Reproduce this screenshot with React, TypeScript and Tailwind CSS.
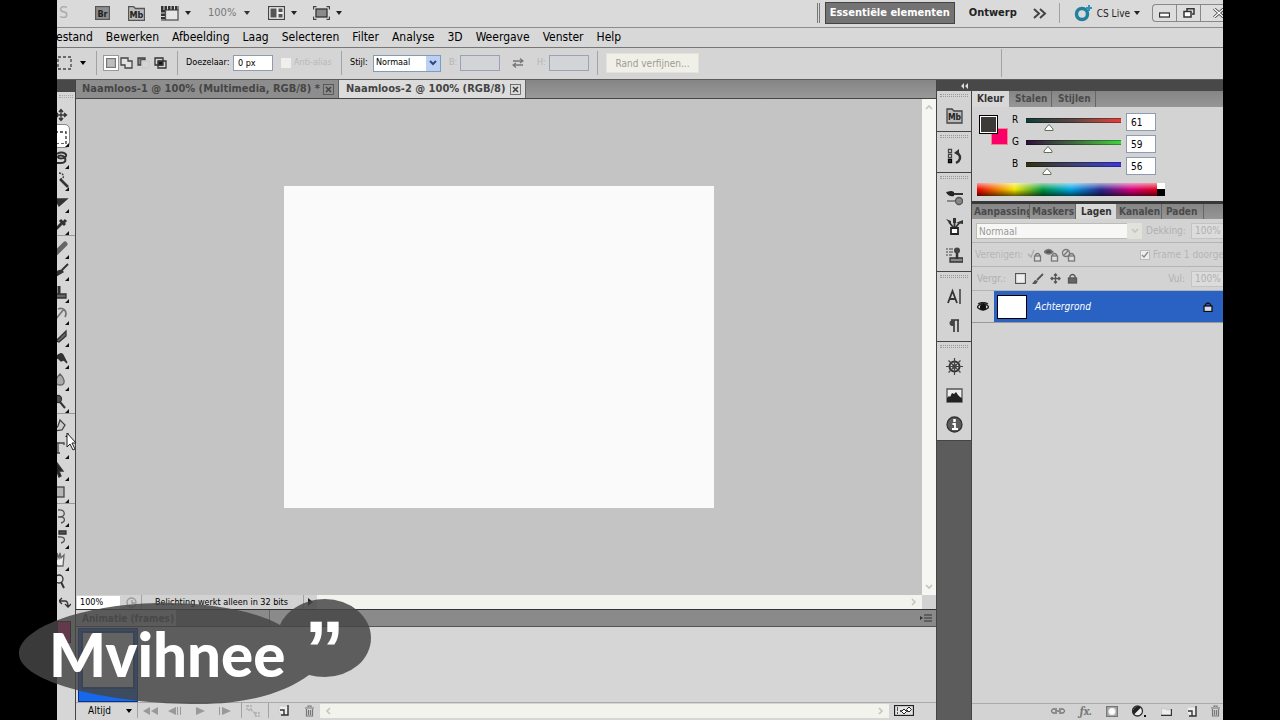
import clsx from 'clsx'
import type { ReactNode } from 'react'

const menus = ['Bewerken', 'Afbeelding', 'Laag', 'Selecteren', 'Filter', 'Analyse', '3D', 'Weergave', 'Venster', 'Help']

const channels = [
  { name: 'R', value: 61, track: 'bg-linear-to-r from-[#0c3b38] via-[#5a4644] to-[#e33b38]' },
  { name: 'G', value: 59, track: 'bg-linear-to-r from-[#2d0c38] via-[#3f6b3f] to-[#3bd43a]' },
  { name: 'B', value: 56, track: 'bg-linear-to-r from-[#33300a] via-[#3f3f70] to-[#3b34dc]' },
]

function Icon({ children, w = 16, h = 16, className }: { children: ReactNode; w?: number; h?: number; className?: string }) {
  return (
    <svg
      width={w}
      height={h}
      viewBox={`0 0 ${w} ${h}`}
      fill="none"
      stroke="currentColor"
      strokeWidth="1.3"
      className={clsx('shrink-0', className)}
      aria-hidden="true"
    >
      {children}
    </svg>
  )
}

function Caret({ className }: { className?: string }) {
  return (
    <Icon w={6} h={4} className={className}>
      <path d="M0 0h6L3 4z" fill="currentColor" stroke="none" />
    </Icon>
  )
}

function Divider({ className }: { className?: string }) {
  return <span className={clsx('w-px shrink-0 bg-[#a2a2a2]', className)} />
}

function AppBar() {
  return (
    <header className="flex h-7 shrink-0 items-center border-b border-[#8c8c8c] bg-[#dadada] pb-px text-[#222]">
      <span className="ml-[2px] w-9 text-base leading-5 text-[#aaa]">S</span>
      <button aria-label="Bridge">
        <Icon w={15} h={14}>
          <rect x=".5" y=".5" width="14" height="13" fill="#8d8d8d" stroke="#555" />
          <text x="7.5" y="10.5" textAnchor="middle" fontSize="9" fontWeight="700" fill="#222" stroke="none">Br</text>
        </Icon>
      </button>
      <button aria-label="Mini Bridge" className="ml-[18px]">
        <Icon w={17} h={15}>
          <path d="M.5 14.500V.5h5l2 2h9v12z" fill="#bbb" stroke="#555" />
          <text x="8.500" y="11.500" textAnchor="middle" fontSize="9" fontWeight="700" fill="#222" stroke="none">Mb</text>
        </Icon>
      </button>
      <button aria-label="Extra's" className="ml-4 flex items-center gap-[6px]">
        <Icon w={18} h={15}>
          <rect x="4.500" y="4" width="12.500" height="10" fill="#e6e6e6" stroke="#555" />
          <path d="M0 2h18" stroke="#333" strokeWidth="4" strokeDasharray="2.500 1" />
          <path d="M2 4v11" stroke="#333" strokeWidth="4" strokeDasharray="2.500 1" />
        </Icon>
        <Caret />
      </button>
      <button aria-label="Zoomniveau" className="ml-[17px] flex items-center gap-2 text-[11px] text-[#777]">
        100%
        <Caret className="text-[#333]" />
      </button>
      <button aria-label="Documenten schikken" className="ml-[18px] flex items-center gap-[6px]">
        <Icon w={17} h={14}>
          <rect x=".5" y=".5" width="16" height="13" fill="#eee" stroke="#444" />
          <path d="M2.500 2.500h6v9h-6zM10.500 2.500h4v3.500h-4zM10.500 8h4v3.500h-4z" fill="#555" stroke="none" />
        </Icon>
        <Caret />
      </button>
      <button aria-label="Schermmodus" className="ml-4 flex items-center gap-[6px]">
        <Icon w={17} h={14}>
          <rect x="3" y="3" width="11" height="8" fill="#8a8a8a" stroke="#333" />
          <path d="M.5 3.500v-3h3M13.500.5h3v3M16.500 10.500v3h-3M3.500 13.500h-3v-3" stroke="#444" />
        </Icon>
        <Caret />
      </button>
      <div className="ml-auto flex items-center">
        <span className="h-5 w-[3px] border-x border-[#777]" />
        <button className="ml-[5px] flex h-[22px] w-[130px] items-center justify-center border border-[#444] bg-[#737373] text-[11px] font-bold whitespace-nowrap text-white">
          Essentiële elementen
        </button>
        <button className="ml-[14px] w-12 text-[11px] font-bold">Ontwerp</button>
        <button aria-label="Meer werkruimten" className="ml-4">
          <Icon w={14} h={11}>
            <path d="m1 1 5 4.500L1 10M7 1l5 4.500L7 10" stroke="#444" strokeWidth="2" />
          </Icon>
        </button>
        <Divider className="ml-3 h-5" />
        <button className="ml-[14px] flex items-center gap-1 text-[10px] whitespace-nowrap">
          <Icon w={19} h={18}>
            <circle cx="8" cy="10" r="5.500" stroke="#21809d" strokeWidth="3.500" />
            <path d="M15 1v6M12 4h6" stroke="#2c94b4" strokeWidth="2" />
          </Icon>
          CS Live
          <Caret />
        </button>
        <div className="ml-3 flex h-[18px] w-[71px] overflow-hidden rounded-l-sm border border-r-0 border-[#888] bg-[#dedede]">
          <button aria-label="Minimaliseren" className="flex w-6 shrink-0 items-center justify-center border-r border-[#888]">
            <Icon w={11} h={10}>
              <rect x=".5" y="5" width="10" height="4" fill="#fff" stroke="#333" />
            </Icon>
          </button>
          <button aria-label="Vorig formaat" className="flex w-6 shrink-0 items-center justify-center border-r border-[#888]">
            <Icon w={12} h={10}>
              <path d="M4 3V.7h7V6H9" stroke="#333" strokeWidth="1.500" />
              <rect x="1" y="3.500" width="7" height="5.500" fill="#fff" stroke="#333" strokeWidth="1.500" />
            </Icon>
          </button>
          <button aria-label="Sluiten" className="flex w-6 shrink-0 items-center justify-end">
            <Icon w={12} h={10}>
              <path d="m1 .5 10 9M11 .5l-10 9" stroke="#444" strokeWidth="3" />
              <path d="m1 .5 10 9M11 .5l-10 9" stroke="#fff" strokeWidth="1.400" />
            </Icon>
          </button>
        </div>
      </div>
    </header>
  )
}

function OptionsBar() {
  return (
    <div className="flex h-8 shrink-0 items-center border-b border-[#5c5c5c] bg-[#d5d5d5] pb-px text-[9px] text-black">
      <Icon className="text-[#444]" h={14}>
        <rect x="1" y="1" width="13" height="12" strokeDasharray="3 2" />
      </Icon>
      <Caret className="ml-[7px]" />
      <Divider className="ml-[10px] h-6" />
      <button aria-label="Nieuwe selectie" className="ml-[6px] flex h-4 w-4 items-center justify-center border border-[#999] bg-white">
        <Icon w={10} h={10}>
          <rect x=".5" y=".5" width="9" height="9" fill="#bdbdbd" stroke="#777" />
        </Icon>
      </button>
      <button aria-label="Toevoegen aan selectie" className="ml-px">
        <Icon w={14} h={12} className="text-[#444]">
          <path d="M1 1h7v3h4v7H5V8H1z" fill="#e2e2e2" />
        </Icon>
      </button>
      <button aria-label="Verwijderen uit selectie" className="ml-[3px]">
        <Icon w={14} h={12} className="text-[#444]">
          <path d="M1 8V1h7v2H4v5z" fill="#888" />
          <path d="M5 4h7v7H5z" stroke="#ccc" />
        </Icon>
      </button>
      <button aria-label="Doorsnede maken" className="ml-[3px]">
        <Icon w={13} h={12} className="text-[#333]">
          <path d="M1 1h8v7H1zM4 4h8v7H4z" />
          <path d="M4.500 4.500h4v3.500h-4z" fill="#111" />
        </Icon>
      </button>
      <Divider className="ml-[10px] h-6" />
      <label htmlFor="feather" className="ml-2 w-11 whitespace-nowrap">Doezelaar:</label>
      <input id="feather" defaultValue="0 px" className="ml-[3px] h-4 w-10 border border-[#8f9bb0] bg-white pl-1" />
      <label className="ml-2 flex w-[52px] items-center gap-[3px] whitespace-nowrap text-[#b8b8b8]">
        <input type="checkbox" disabled className="size-[10px] appearance-none bg-[#efefef]" />
        Anti-alias
      </label>
      <Divider className="ml-2 h-6" />
      <label htmlFor="style" className="ml-2 w-5">Stijl:</label>
      <div className="relative ml-[3px] flex w-[68px]">
        <select id="style" className="h-[17px] w-full appearance-none border border-[#7f9db9] bg-white pl-[2px]">
          <option>Normaal</option>
        </select>
        <span className="pointer-events-none absolute top-px right-px flex h-[15px] w-[14px] items-center justify-center bg-[#bccff5]">
          <Icon w={8} h={6}>
            <path d="m1 1 3 3 3-3" stroke="#33497c" strokeWidth="2" />
          </Icon>
        </span>
      </div>
      <label htmlFor="width" className="ml-2 w-[11px] text-[#b4b4b4]">B:</label>
      <input id="width" disabled className="h-4 w-10 border border-[#9aa3b5] bg-[#d3d4d8]" />
      <Icon w={12} h={10} className="ml-3 text-[#777]">
        <path d="M1 3h10M8 .5 11 3 8 5M11 7H1M4 5 1 7l3 2.500" />
      </Icon>
      <label htmlFor="height" className="ml-[13px] w-3 text-[#b4b4b4]">H:</label>
      <input id="height" disabled className="h-4 w-10 border border-[#9aa3b5] bg-[#d3d4d8]" />
      <Divider className="ml-2 h-6" />
      <button disabled className="ml-2 h-5 w-[93px] border border-[#e3e3da] bg-[#f0f0e8] text-[10px] whitespace-nowrap text-[#9c9c94]">
        Rand verfijnen...
      </button>
      <span className="grow" />
      <Divider className="mr-[221px] h-7" />
    </div>
  )
}

const toolGroups: { name: string; icon: ReactNode }[][] = [
  [
    { name: 'Verplaatsen', icon: <path d="M8 4v10M3 9h10M6 6l2-2.500L10 6M6 12l2 2.500L10 12M5 7 2.500 9 5 11M11 7l2.500 2L11 11" /> },
    { name: 'Selectiekader', icon: <rect x="2" y="4" width="11" height="12" strokeDasharray="3 2" /> },
    { name: 'Lasso', icon: <path d="M4 4c4-3 10-1 9 2s-8 3-8 1 6-2 7 1 0 5-4 5H4" strokeWidth="2" /> },
    { name: 'Snelle selectie', icon: <><path d="m7 7 8 8" strokeWidth="2.500" /><path d="M6 1c5 0 6 5 2 6" strokeDasharray="2 1" /></> },
    { name: 'Uitsnijden', icon: <path d="M2 5h12L6 12z" fill="currentColor" /> },
    { name: 'Pipet', icon: <path d="m2 14 7-7M7 4l5 5M10 7l3-3" strokeWidth="3" /> },
  ],
  [
    { name: 'Retoucheerpenseel', icon: <path d="m3 13 9-9" stroke="#666" strokeWidth="5" strokeLinecap="round" /> },
    { name: 'Penseel', icon: <><path d="m9 8 6-6" strokeWidth="2" /><path d="m3 14 2-5 4-1 1 2z" fill="currentColor" /></> },
    { name: 'Kloonstempel', icon: <><path d="M3 10h10v4H3" fill="#666" /><path d="M6 2v8" strokeWidth="3" /></> },
    { name: 'Historiepenseel', icon: <path d="M2 14 11 3M5 3c5-2 10 2 7 8" stroke="#777" strokeWidth="1.800" /> },
    { name: 'Gummetje', icon: <path d="m3 13 10-10v5l-7 6z" fill="#666" /> },
    { name: 'Emmertje', icon: <path d="M2 9c3-6 7-6 8-4l4 8-3-3-3 1-3-3z" fill="#333" /> },
    { name: 'Vervagen', icon: <path d="M7 2c5 5 6 11 0 11S2 7 7 2z" fill="#aaa" stroke="#666" /> },
    { name: 'Tegenhouden', icon: <><circle cx="5" cy="5" r="3.500" fill="#555" /><path d="m7 8 5 6" strokeWidth="2" /></> },
  ],
  [
    { name: 'Pen', icon: <path d="M7 2 12 7l-3 5-8 1 4-5z" fill="#ccc" stroke="#444" /> },
    { name: 'Tekst', icon: <path d="M0 5V3h11v2M5 3v10M3 13h4" stroke="#444" /> },
    { name: 'Padselectie', icon: <path d="m4 1 6 8-4 0 2 5-2 1-2-5-2 2z" fill="#222" /> },
    { name: 'Rechthoek', icon: <rect x="-1" y="3" width="12" height="10" fill="#b5b5b5" stroke="#444" /> },
  ],
  [
    { name: '3D-object', icon: <path d="M5 2c8-1 8 7 2 7M5 9c8-1 8 5 3 6" stroke="#555" /> },
    { name: '3D-camera', icon: <><path d="M6 1h7v3H6z" fill="#555" /><path d="M5 7c8-1 8 5 3 6" stroke="#555" /></> },
    { name: 'Handje', icon: <path d="M2 7V3l2 3V1l2 5 1-5 1 5 3-3-1 11H4z" fill="#eee" stroke="#666" /> },
    { name: 'Zoomen', icon: <><circle cx="6" cy="5" r="4" fill="#ddd" /><path d="m8 8 3 6" strokeWidth="2" /></> },
  ],
]

function Toolbox() {
  return (
    <aside className="flex w-[18px] shrink-0 flex-col overflow-hidden bg-[#d6d6d6]">
      <div className="h-3 shrink-0 bg-[#484848]" />
      <div className="mx-[2px] mt-[3px] mb-[5px] h-[3px] shrink-0 border-y border-dotted border-[#aaa]" />
      {toolGroups.map((group, i) => (
        <div key={i} className={clsx('shrink-0', i > 0 && 'border-t border-[#999] pt-px')}>
          {group.map((tool) => (
            <button
              key={tool.name}
              aria-label={tool.name}
              className={clsx(
                'relative -ml-1 block h-[22px] w-4 text-[#333]',
                tool.name === 'Selectiekader' && 'rounded-sm bg-white outline outline-[#888]',
              )}
            >
              <Icon>{tool.icon}</Icon>
              {tool.name !== 'Verplaatsen' && tool.name !== 'Zoomen' && (
                <Icon w={4} h={4} className="absolute right-0 bottom-0">
                  <path d="M4 0v4H0z" fill="#111" stroke="none" />
                </Icon>
              )}
            </button>
          ))}
        </div>
      ))}
      <Icon w={12} h={12} className="mt-1 ml-[2px] text-[#333]">
        <path d="M1 4h5q3 0 3 5M3 1 0 4l3 3M6 7l3 3 3-3" />
      </Icon>
      <div className="mt-3 h-[22px] w-[14px] shrink-0 border border-black bg-[#f4006a]" />
    </aside>
  )
}

function DocumentTab({ title, active }: { title: string; active?: boolean }) {
  return (
    <div
      className={clsx(
        'flex items-center border-r border-[#666] text-[11px] font-bold whitespace-nowrap',
        active ? 'w-[187px] bg-[#dcdcdc] pl-[7px] text-[#444]' : 'w-[263px] bg-[#8d8d8d] pl-[6px] text-[#454545]',
      )}
    >
      <button className="grow text-left">{title}</button>
      <button aria-label="Tabblad sluiten" className="mr-1">
        <Icon w={11} h={11}>
          <rect x=".5" y=".5" width="10" height="10" fill="none" stroke="currentColor" strokeWidth=".7" />
          <path d="m3 3 5 5M8 3 3 8" strokeWidth="1.600" />
        </Icon>
      </button>
    </div>
  )
}

function Chevron({ d, className }: { d: string; className?: string }) {
  return (
    <Icon w={8} h={8} className={clsx('text-[#c5c5bb]', className)}>
      <path d={d} strokeWidth="1.600" />
    </Icon>
  )
}

function Workspace() {
  return (
    <main className="flex min-w-0 grow flex-col border-x border-[#444] bg-[#c4c4c4]">
      <div className="flex h-[19px] shrink-0 border-b border-[#444] bg-linear-to-b from-[#858585] to-[#999]">
        <DocumentTab title="Naamloos-1 @ 100% (Multimedia, RGB/8) *" />
        <DocumentTab title="Naamloos-2 @ 100% (RGB/8)" active />
      </div>
      <div className="flex min-h-0 grow">
        <div className="flex grow items-center justify-center">
          <div className="h-[322px] w-[430px] bg-[#fafafa]" />
        </div>
        <div className="flex w-[14px] flex-col items-center justify-between bg-[#f6f6f3] py-1">
          <Chevron d="m1 6 3-3 3 3" />
          <Chevron d="m1 2 3 3 3-3" />
        </div>
      </div>
      <div className="flex h-[14px] shrink-0 items-center bg-[#d2d2d2] text-[9px] leading-3 text-black">
        <input aria-label="Zoom" defaultValue="100%" className="ml-px h-[13px] w-[43px] bg-white pl-[3px]" />
        <Icon w={11} h={11} className="ml-[6px] text-[#999]">
          <circle cx="5.500" cy="5.500" r="4.500" />
          <path d="M6 3v3h3" />
        </Icon>
        <Divider className="ml-1 h-[14px]" />
        <span className="ml-[13px] w-[148px] whitespace-nowrap">Belichting werkt alleen in 32 bits</span>
        <Divider className="h-[14px]" />
        <Icon w={5} h={8} className="ml-1">
          <path d="M0 0v8l5-4z" fill="#222" stroke="none" />
        </Icon>
        <div className="ml-1 flex h-full grow items-center justify-end bg-[#f3f3ee] pr-1">
          <Chevron d="m2 1 3 3-3 3" />
        </div>
        <span className="w-[14px]" />
      </div>
      <AnimationPanel />
    </main>
  )
}

const playback = [
  { name: 'Eerste frame', d: 'M7 0v8L0 4zM15 0v8L8 4z' },
  { name: 'Vorig frame', d: 'M8 0v8L0 4zM9 0h1v8H9zM12 0h1v8h-1z' },
  { name: 'Afspelen', d: 'M3 0v8l9-4z' },
  { name: 'Volgend frame', d: 'M1 0h1v8H1zM4 0v8l9-4z' },
]

function AnimationPanel() {
  return (
    <section className="flex h-[111px] shrink-0 flex-col border-t border-[#333] bg-[#d6d6d6]">
      <div className="flex h-[17px] shrink-0 items-stretch border-b border-[#555] bg-[#8a8a8a] text-[10px] font-bold text-[#555]">
        <button className="w-[100px] bg-[#cfcfcf] pl-[6px] text-left whitespace-nowrap">Animatie (frames)</button>
        <span className="w-[94px] border-r border-[#666]" />
        <button aria-label="Paneelmenu" className="ml-auto flex items-center pr-1">
          <Icon w={12} h={8} className="text-[#333]">
            <path d="M4 1h8M4 4h8M4 7h8" strokeWidth="1" />
            <path d="M0 2v4l3-2z" fill="currentColor" stroke="none" />
          </Icon>
        </button>
      </div>
      <div className="flex grow pt-px pl-[2px]">
        <div className="flex w-[60px] flex-col border border-[#0b2f8a] bg-[#1769ec] p-[2px]">
          <div className="h-[58px] border-2 border-[#123c9c] bg-white" />
        </div>
      </div>
      <div className="flex h-[18px] shrink-0 items-center border-t border-[#aaa] pb-[2px] text-[10px] text-black">
        <button className="ml-3 flex w-[44px] items-center justify-between">
          Altijd
          <Caret />
        </button>
        <Divider className="ml-[5px] h-[15px]" />
        <div className="ml-[5px] flex w-[90px] items-center justify-between text-[#999]">
          {playback.map((control) => (
            <button key={control.name} aria-label={control.name}>
              <Icon w={15} h={8}>
                <path d={control.d} fill="currentColor" stroke="none" />
              </Icon>
            </button>
          ))}
        </div>
        <Divider className="ml-2 h-[15px]" />
        <button aria-label="Tween" className="ml-1">
          <Icon w={16} h={12} className="text-[#aaa]">
            <path d="M1 1h4v4H1zM5 5l4 3M9 8h4v3H9z" strokeDasharray="2 1" />
          </Icon>
        </button>
        <Divider className="ml-[6px] h-[15px]" />
        <button aria-label="Frame dupliceren" className="ml-[9px]">
          <NewIcon />
        </button>
        <button aria-label="Frame verwijderen" className="ml-4 text-[#777]">
          <TrashIcon />
        </button>
        <div className="ml-[6px] flex h-[14px] grow items-center justify-between bg-[#f3f3ee] px-1">
          <Chevron d="M6 1 3 4l3 3" />
          <Chevron d="m2 1 3 3-3 3" />
        </div>
        <button aria-label="Omzetten in tijdlijn" className="mr-[22px] ml-[5px]">
          <Icon w={20} h={11}>
            <rect x=".5" y=".5" width="19" height="10" fill="#e4e4e4" stroke="#222" />
            <path d="M3 3h1M3 5h1M3 8h1M6 6h9" stroke="#222" />
            <path d="m10 4 2.500 2.500L10 9 7.500 6.500zM15 2l2.500 2.500L15 7l-2.500-2.500z" fill="#fff" stroke="#222" strokeWidth="1" />
          </Icon>
        </button>
      </div>
    </section>
  )
}

function NewIcon() {
  return (
    <Icon w={11} h={11}>
      <path d="M1 1h9v9H4L1 7z" fill="#eee" stroke="#ccc" strokeWidth="1" />
      <path d="M10 0v10H3M2 5h4v5" stroke="#333" strokeWidth="1.400" />
    </Icon>
  )
}

function TrashIcon() {
  return (
    <Icon w={9} h={12}>
      <path d="M0 3h9M3 2V1h3v1M1.500 4v7h6V4M3.500 5v5M5.500 5v5" strokeWidth="1.200" />
    </Icon>
  )
}

const dock: { name: string; icon: ReactNode }[][] = [
  [
    {
      name: 'Mini Bridge',
      icon: (
        <>
          <path d="M1 16V2h5l2 2h8v12z" fill="#bbb" stroke="#444" />
          <text x="8.500" y="13" textAnchor="middle" fontSize="8.500" fontWeight="700" fill="#222" stroke="none">Mb</text>
        </>
      ),
    },
  ],
  [
    {
      name: 'Historie',
      icon: (
        <>
          <path d="M2.500 1.500h3v3h-3zM2.500 6.500h3v3h-3z" fill="#fff" stroke="#444" />
          <path d="M2.500 11.500h3v3h-3z" fill="#444" />
          <path d="M10 15q7-4 2-10" stroke="#333" strokeWidth="2.400" />
          <path d="M8 5l5-4v7z" fill="#333" stroke="none" />
        </>
      ),
    },
  ],
  [
    {
      name: 'Penseel',
      icon: (
        <>
          <path d="M7 5h10" stroke="#333" strokeWidth="2" />
          <path d="M0 3c3 0 4-2 8 0v4c-3 1-6 0-8-4z" fill="#222" stroke="none" />
          <path d="M1 12h10" stroke="#888" strokeWidth="2" />
          <circle cx="13" cy="12" r="3.500" fill="#888" stroke="#555" />
        </>
      ),
    },
    {
      name: 'Penseelvoorinstellingen',
      icon: (
        <>
          <path d="M5 10h7v6H5z" fill="#fff" stroke="#222" strokeWidth="1.800" />
          <path d="M7 9 3 4M8.500 9V3M10 9l4-5" stroke="#333" strokeWidth="1.800" />
          <path d="M0 1l5 2v4zM7 0h3v5H7zM10 5l7-3v4z" fill="#333" stroke="none" />
        </>
      ),
    },
    {
      name: 'Bron klonen',
      icon: (
        <>
          <path d="M0 2h2M3 2h4M0 5h2M3 5h4M0 8h2M3 8h3" stroke="#444" strokeWidth="1" />
          <path d="M4 11h13v4H4z" fill="#888" stroke="#333" />
          <path d="M11 4v8" stroke="#333" strokeWidth="2.500" />
          <circle cx="11" cy="3.500" r="3" fill="#444" stroke="none" />
        </>
      ),
    },
  ],
  [
    { name: 'Teken', icon: <><path d="M2 15 6.500 3 11 15M3.500 11h6" stroke="#333" strokeWidth="1.800" /><path d="M14 1v15" stroke="#222" /></> },
    { name: 'Alinea', icon: <><path d="M8 3v12M12 3v12M5 3h8" stroke="#333" strokeWidth="1.600" /><path d="M8 3C2 2 2 10 8 9z" fill="#444" stroke="none" /></> },
  ],
  [
    {
      name: 'Navigator',
      icon: (
        <>
          <circle cx="8.500" cy="8.500" r="5" stroke="#333" strokeWidth="2" />
          <circle cx="8.500" cy="8.500" r="1.500" fill="#333" />
          <path d="M8.500 0v17M0 8.500h17M2.500 2.500l12 12M14.500 2.500l-12 12" stroke="#444" strokeWidth="1.200" />
        </>
      ),
    },
    {
      name: 'Histogram',
      icon: (
        <>
          <path d="M1 2h15v13H1z" fill="#eee" stroke="#555" />
          <path d="M1 15v-4l2-2 1 1 2-4 2 1 2-2 2 3 2 2 2 1v4z" fill="#222" stroke="none" />
        </>
      ),
    },
    {
      name: 'Info',
      icon: (
        <>
          <circle cx="8.500" cy="8.500" r="7.500" fill="#5b5b5b" stroke="#333" />
          <path d="M8.500 3v3" stroke="#fff" strokeWidth="2.500" />
          <path d="M6.500 8h2.500v5M6 13h6" stroke="#fff" strokeWidth="1.800" />
        </>
      ),
    },
  ],
]

function Dock() {
  return (
    <nav className="flex w-[35px] shrink-0 flex-col border-r border-[#444] bg-[#5c5c5c]">
      {dock.map((group, i) => (
        <div key={i} className="flex flex-col items-center border-b border-[#444] bg-[#d3d3d3] pt-[3px]">
          <div className="mb-1 h-[3px] w-7 border-y border-dotted border-[#999]" />
          {group.map((item) => (
            <button key={item.name} aria-label={item.name} className="flex h-[29px] w-full items-center justify-center">
              <Icon w={17} h={17}>{item.icon}</Icon>
            </button>
          ))}
          <span className="h-px" />
        </div>
      ))}
    </nav>
  )
}

function PanelTab({ children, active, className }: { children: ReactNode; active?: boolean; className?: string }) {
  return (
    <button
      className={clsx(
        'overflow-hidden text-left text-[10px] leading-[14px] font-bold whitespace-nowrap',
        active ? 'bg-[#d8d8d8] text-[#333]' : 'border-r border-[#666] text-[#4a4a4a]',
        className,
      )}
    >
      {children}
    </button>
  )
}

function ColorPanel() {
  return (
    <section className="shrink-0">
      <div className="flex h-4 bg-linear-to-b from-[#858585] to-[#969696]">
        <PanelTab active className="w-[37px] pl-[5px]">Kleur</PanelTab>
        <PanelTab className="w-[43px] pl-[6px]">Stalen</PanelTab>
        <PanelTab className="w-[44px] pl-[6px]">Stijlen</PanelTab>
      </div>
      <div className="h-[94px] px-[5px] pt-[6px]">
        <div className="flex gap-1">
          <div className="relative mt-[2px] h-[30px] w-[31px] shrink-0">
            <button aria-label="Achtergrondkleur" className="absolute right-0 bottom-0 size-[17px] border border-[#e88] bg-[#fb0068]" />
            <button aria-label="Voorgrondkleur" className="absolute top-0 left-[2px] size-[19px] border-2 border-black bg-[#3d3b38] outline -outline-offset-2 outline-white" />
          </div>
          <div className="flex flex-col gap-1">
            {channels.map((channel) => (
              <div key={channel.name} className="flex h-[18px] text-[10px] text-black">
                <label htmlFor={channel.name} className="w-[14px] leading-[14px]">{channel.name}</label>
                <div className="relative mt-[5px] h-3 w-[95px]">
                  <div className={clsx('h-[5px] border-y border-black/30', channel.track)} />
                  <input
                    id={channel.name}
                    type="range"
                    max="255"
                    defaultValue={channel.value}
                    className="absolute inset-0 w-full opacity-0"
                  />
                  <div
                    className="pointer-events-none absolute top-[6px] -translate-x-1/2"
                    style={{ left: `${(channel.value / 255) * 100}%` }}
                  >
                    <Icon w={10} h={7}>
                      <path d="M5 .5 9 5v1.500H1V5z" fill="#fff" stroke="#5d715d" strokeWidth="1" />
                    </Icon>
                  </div>
                </div>
                <input
                  aria-label={`Waarde ${channel.name}`}
                  defaultValue={channel.value}
                  className="ml-[5px] h-[18px] w-[30px] border border-[#8d9bb3] bg-white pl-1"
                />
              </div>
            ))}
          </div>
        </div>
        <div className="relative mt-2 flex h-[13px] w-[188px] bg-[linear-gradient(90deg,#e00,#f4e600_20%,#009640_35%,#00a6e6_50%,#2a2a90_66%,#d8007c_82%,#e00018_96%)]">
          <div className="absolute inset-0 bg-linear-to-b from-white/60 via-transparent to-black/60" />
          <div className="relative ml-auto w-2 bg-linear-to-b from-white from-50% to-black to-50%" />
        </div>
      </div>
    </section>
  )
}

function LockBadge() {
  return (
    <>
      <path d="M8.500 8V6.500q2-2 4 0V8" />
      <rect x="7.500" y="8" width="6" height="5" fill="#ddd" />
    </>
  )
}

function LayersPanel() {
  return (
    <section className="flex min-h-0 grow flex-col border-t-[3px] border-[#383838]">
      <div className="flex h-[15px] shrink-0 bg-linear-to-b from-[#858585] to-[#969696]">
        <PanelTab className="w-[58px] pl-[2px]">Aanpassing</PanelTab>
        <PanelTab className="w-[46px] pl-[2px]">Maskers</PanelTab>
        <PanelTab active className="w-[40px] pl-[5px]">Lagen</PanelTab>
        <PanelTab className="w-[46px] pl-[3px]">Kanalen</PanelTab>
        <PanelTab className="w-[42px] pl-1">Paden</PanelTab>
      </div>
      <div className="flex h-6 shrink-0 items-center border-b border-[#b4b4b4] pl-[4px] text-[10px] whitespace-nowrap text-[#b0b0b0]">
        <div className="relative flex w-[166px]">
          <select aria-label="Overvloeimodus" disabled className="h-4 w-full appearance-none border border-[#bcbcb4] bg-[#f7f7f5] pl-[2px] text-[#999] opacity-100">
            <option>Normaal</option>
          </select>
          <span className="pointer-events-none absolute top-0 right-0 flex h-4 w-[15px] items-center justify-center bg-[#e2e2dc]">
            <Chevron d="m1 2 3 3 3-3" />
          </span>
        </div>
        <label htmlFor="opacity" className="ml-1 grow">Dekking:</label>
        <input id="opacity" disabled defaultValue="100%" className="h-4 w-8 border border-r-0 border-[#c3c3c3] bg-[#dcdcdc] pl-[3px]" />
      </div>
      <div className="flex h-6 shrink-0 items-center border-b border-[#b4b4b4] pl-[3px] text-[10px] whitespace-nowrap text-[#b5b5b5]">
        <span className="w-[48px]">Verenigen:</span>
        <div className="ml-1 flex gap-[2px] text-[#777]">
          <button aria-label="Positie verenigen"><Icon w={15} h={14}><path d="m1 6 3 3 3-7" stroke="#aaa" /><LockBadge /></Icon></button>
          <button aria-label="Zichtbaarheid verenigen"><Icon w={15} h={14}><path d="M0 4q5-5 9 0-4 4-9 0z" fill="#555" /><LockBadge /></Icon></button>
          <button aria-label="Stijl verenigen"><Icon w={15} h={14}><circle cx="5" cy="5" r="3.500" /><path d="m2 8 6-6" /><LockBadge /></Icon></button>
        </div>
        <label className="ml-auto flex w-[83px] items-center gap-[3px]">
          <span className="relative flex size-[10px] shrink-0 items-center justify-center border border-[#bbb] bg-[#eee]">
            <input type="checkbox" defaultChecked disabled className="absolute inset-0 appearance-none" />
            <Icon w={8} h={8}><path d="m1 4 2 2 4-5" stroke="#888" /></Icon>
          </span>
          Frame 1 doorge
        </label>
      </div>
      <div className="flex h-6 shrink-0 items-center border-b border-[#b4b4b4] pl-[5px] text-[10px] whitespace-nowrap text-[#b0b0b0]">
        <span className="w-[36px]">Vergr.:</span>
        <div className="ml-[2px] flex items-center gap-[6px] text-[#555]">
          <button aria-label="Transparante pixels vergrendelen"><Icon w={11} h={11}><rect x=".5" y=".5" width="10" height="10" fill="#eee" /></Icon></button>
          <button aria-label="Pixels vergrendelen"><Icon w={12} h={12}><path d="m5 7 6-6" strokeWidth="1.800" /><path d="m0 11 3-4 3 1-2 3z" fill="currentColor" stroke="none" /></Icon></button>
          <button aria-label="Positie vergrendelen"><Icon w={11} h={11}><path d="M5.500 1v9M1 5.500h9M4 2.500 5.500 1 7 2.500M4 8.500 5.500 10 7 8.500M2.500 4 1 5.500 2.500 7M8.500 4 10 5.500 8.500 7" /></Icon></button>
          <button aria-label="Alles vergrendelen"><Icon w={11} h={11}><path d="M3 5V3q2.500-3 5 0v2" /><rect x="1.500" y="5" width="8" height="5" fill="#666" /></Icon></button>
        </div>
        <label htmlFor="fill" className="ml-auto">Vul:</label>
        <input id="fill" disabled defaultValue="100%" className="ml-[6px] h-4 w-8 border border-r-0 border-[#c3c3c3] bg-[#dcdcdc] pl-[3px]" />
      </div>
      <div className="flex h-8 shrink-0 items-stretch border-b border-[#999] text-[10px] text-white">
        <button aria-label="Laag zichtbaar" className="flex w-[22px] items-center justify-center">
          <Icon w={12} h={10}>
            <path d="M0 5q6-7 12 0-6 6-12 0z" fill="#eee" stroke="#222" />
            <circle cx="6" cy="5" r="2.500" fill="#111" stroke="#111" />
            <path d="M1 2q5-3 10 0" stroke="#222" />
          </Icon>
        </button>
        <div className="flex grow items-center bg-[#2a62c3] pr-[10px]">
          <div className="ml-[3px] h-6 w-[30px] border border-black bg-white" />
          <button className="ml-2 italic">Achtergrond</button>
          <Icon w={10} h={10} className="ml-auto">
            <path d="M2.500 4V2.500q2.500-3 5 0V4" stroke="#111" />
            <rect x="1" y="4" width="8" height="5.500" fill="#d5ddee" stroke="#111" />
          </Icon>
        </div>
      </div>
      <div className="grow" />
      <div className="flex h-[17px] shrink-0 items-center justify-end gap-[14px] border-t border-[#aaa] pr-[3px] pb-[2px] text-[#777]">
        <button aria-label="Lagen koppelen"><Icon w={16} h={8}><path d="M7 2H3Q0 4 3 6h4M9 2h4q3 2 0 4H9M5 4h6" /></Icon></button>
        <button aria-label="Laagstijl" className="font-serif text-[12px] leading-3 font-bold italic">fx.</button>
        <button aria-label="Laagmasker"><Icon w={12} h={11}><rect x=".5" y=".5" width="11" height="10" fill="#aaa" /><circle cx="6" cy="5.500" r="3" fill="#fff" stroke="#eee" /></Icon></button>
        <button aria-label="Aanpassingslaag"><Icon w={15} h={12}><circle cx="5.500" cy="6" r="5" fill="#eee" stroke="#333" /><path d="M2 9.500A5 5 0 0 1 9 2.500z" fill="#222" stroke="none" /><path d="M12 11h2" stroke="#111" strokeWidth="2" /></Icon></button>
        <button aria-label="Nieuwe groep"><Icon w={11} h={9}><path d="M.5 8.500v-7h4l1 1h5v6z" fill="#eee" stroke="#ccc" /><path d="M0 8.500h10.500V2" stroke="#333" /></Icon></button>
        <button aria-label="Nieuwe laag"><NewIcon /></button>
        <button aria-label="Laag verwijderen"><TrashIcon /></button>
      </div>
    </section>
  )
}

function Watermark() {
  return (
    <div className="pointer-events-none absolute bottom-0 left-0 h-[130px] w-[380px]">
      <svg width="380" height="130" viewBox="0 0 380 130" className="absolute inset-0" aria-hidden="true">
        <g fill="#454545" opacity=".84">
          <path d="M19 62C22 36 88 13 165 13c50 0 92 9 115 22 6-14 24-26 45-26a46 39 0 0 1 0 78c-6 0-11-1-16-2-24 18-62 29-110 29C110 114 16 92 19 62z" />
        </g>
      </svg>
      <p className="absolute bottom-[32px] left-[49px] flex items-baseline gap-[19px] font-[Lato] text-[60px] leading-[68px] font-black whitespace-nowrap text-white">
        Mvihnee <span className="font-['Liberation_Sans'] text-[80px] leading-[68px] font-bold">”</span>
      </p>
    </div>
  )
}

export default function App() {
  return (
    <div className="relative h-screen overflow-hidden bg-black px-[57px] font-['DejaVu_Sans_Condensed','Noto_Sans',sans-serif]">
      <div className="flex h-full flex-col overflow-hidden bg-[#d4d4d4]">
        <AppBar />
        <nav className="flex h-5 shrink-0 items-center gap-[13px] border-b border-[#777] bg-[#d8d8d8] pb-[2px] text-[12px] leading-4 text-black">
          <button aria-label="Bestand" className="-ml-px">estand</button>
          {menus.map((menu) => (
            <button key={menu}>{menu}</button>
          ))}
        </nav>
        <OptionsBar />
        <div className="flex min-h-0 grow">
          <Toolbox />
          <Workspace />
          <div className="flex w-[286px] shrink-0 flex-col">
            <div className="flex h-[11px] shrink-0 items-center bg-[#484848] pl-6">
              <Icon w={7} h={6}>
                <path d="M3 0v6L0 3zM7 0v6L4 3z" fill="#ddd" stroke="none" />
              </Icon>
            </div>
            <div className="flex min-h-0 grow">
              <Dock />
              <div className="flex min-w-0 grow flex-col bg-[#d3d3d3]">
                <ColorPanel />
                <LayersPanel />
              </div>
            </div>
          </div>
        </div>
      </div>
      <Watermark />
      <svg width="12" height="20" viewBox="0 0 12 20" className="pointer-events-none absolute top-[432px] left-[66px]" aria-hidden="true">
        <path d="M1 1v14l3-3 3 6 2-1-3-6h4z" fill="#fff" stroke="#222" />
      </svg>
    </div>
  )
}
